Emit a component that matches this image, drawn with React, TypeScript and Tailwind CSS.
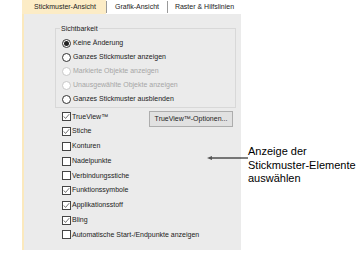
const radios = [
  { label: "Keine Änderung", checked: true, disabled: false },
  { label: "Ganzes Stickmuster anzeigen", checked: false, disabled: false },
  { label: "Markierte Objekte anzeigen", checked: false, disabled: true },
  { label: "Unausgewählte Objekte anzeigen", checked: false, disabled: true },
  { label: "Ganzes Stickmuster ausblenden", checked: false, disabled: false },
];

const checks = [
  { label: "TrueView™", checked: true },
  { label: "Stiche", checked: true },
  { label: "Konturen", checked: false },
  { label: "Nadelpunkte", checked: false },
  { label: "Verbindungsstiche", checked: false },
  { label: "Funktionssymbole", checked: true },
  { label: "Applikationsstoff", checked: true },
  { label: "Bling", checked: true },
  { label: "Automatische Start-/Endpunkte anzeigen", checked: false },
];

const Radio = ({ checked, disabled }: { checked: boolean; disabled: boolean }) => (
  <span
    className={`flex size-[9px] items-center justify-center rounded-full border bg-white ${
      disabled ? "border-[#c8c8c8]" : "border-[#333]"
    }`}
  >
    {checked && <span className="size-[5px] rounded-full bg-[#222]" />}
  </span>
);

const Check = ({ checked }: { checked: boolean }) => (
  <span className="flex size-[9px] items-center justify-center border border-[#444] bg-white">
    {checked && (
      <svg viewBox="0 0 9 9" className="size-[7px]">
        <polyline points="1,4.5 3.3,7 8,1.5" fill="none" stroke="#333" strokeWidth="0.9" />
      </svg>
    )}
  </span>
);

export default function App() {
  return (
    <div
      className="relative flex h-[262px] w-[362px] bg-white text-[7px] text-[#222]"
      style={{ fontFamily: '"Liberation Sans", Arial, sans-serif' }}
    >
      <div className="ml-[22px] flex h-[250px] w-[219px] flex-col">
        <div className="flex h-[14px] shrink-0 items-center bg-white">
          <div className="flex h-full w-[84px] items-center justify-center bg-[#fcecc6] pl-[2px]">
            Stickmuster-Ansicht
          </div>
          <div className="flex h-[12px] w-[62px] items-center justify-center border-x border-[#9a9a9a]">
            Grafik-Ansicht
          </div>
          <div className="flex h-full flex-1 items-center justify-center">Raster &amp; Hilfslinien</div>
        </div>
        <div className="flex flex-1 flex-col border-l-2 border-[#fbe9bd] bg-[#ebebeb] pl-[31px] pt-[14px]">
          <div className="relative h-[80px] w-[181px] border border-[#d8d8d8] pl-[6px] pt-[7px]">
            <span className="absolute -top-[6px] left-[4px] bg-[#ebebeb] px-[1px] leading-[11px]">
              Sichtbarkeit
            </span>
            {radios.map((r) => (
              <div key={r.label} className="flex h-[14px] items-center gap-[2px]">
                <Radio checked={r.checked} disabled={r.disabled} />
                <span className={r.disabled ? "text-[#a6a6a6]" : ""}>{r.label}</span>
              </div>
            ))}
          </div>
          <div className="mt-[1.5px] w-[180px] pl-[7px] pr-[2px]">
            {checks.map((c, i) => (
              <div key={c.label} className="flex h-[14.75px] items-center justify-between">
                <div className="flex items-center gap-[1px]">
                  <Check checked={c.checked} />
                  <span>{c.label}</span>
                </div>
                {i === 0 && (
                  <button className="mt-[5px] flex h-[16px] w-[84px] items-center justify-center border border-[#adadad] bg-[#e1e1e1]">
                    TrueView™-Optionen...
                  </button>
                )}
              </div>
            ))}
          </div>
        </div>
      </div>

      <div className="absolute left-[207px] top-[145px] flex items-start">
        <svg width="41" height="26" viewBox="0 0 41 26">
          <line x1="3" y1="13" x2="41" y2="13" stroke="#000" strokeWidth="1" />
          <polygon points="0,13 5,11 5,15" fill="#555" />
        </svg>
        <div className="text-[11px] leading-[13.5px] text-black">
          Anzeige der
          <br />
          Stickmuster-Elemente
          <br />
          auswählen
        </div>
      </div>
    </div>
  );
}
